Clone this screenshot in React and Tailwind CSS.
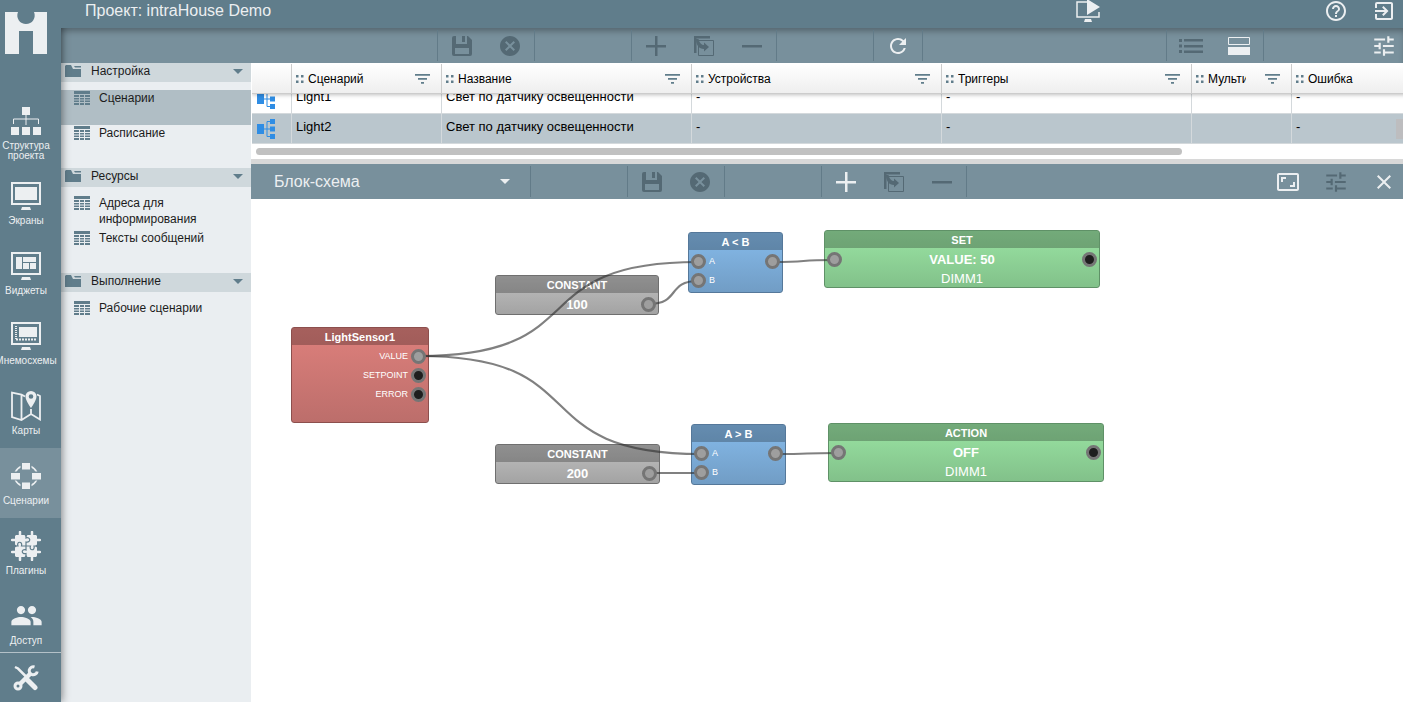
import { useEffect, useRef, useState } from 'react'
import {
  MdAspectRatio,
  MdCancel,
  MdClose,
  MdExitToApp,
  MdHelpOutline,
  MdPeople,
  MdRefresh,
  MdTune
} from 'react-icons/md'

/* ---------- icons ---------- */

const Logo = () => (
  <svg viewBox="0 0 42 42" className="size-[42px] fill-[#eceff1]">
    <path d="M0 0H13A8.700 8.700 0 1 0 29 0H42V42H28V19H14V42H0Z" />
  </svg>
)

const StructureIcon = () => (
  <svg viewBox="0 0 30 30" className="size-[30px] fill-current">
    <path d="M11 1h8v8h-8zM0 21h8v8H0zM11 21h8v8h-8zM22 21h8v8h-8z" />
    <path d="M15 9v10M2.500 18v-5h25v5" fill="none" stroke="currentColor" />
  </svg>
)

const Monitor = ({ children }) => (
  <svg viewBox="0 0 30 30" className="size-[30px] fill-current">
    <rect x="1" y="2" width="28" height="21" fill="none" stroke="currentColor" strokeWidth="2" />
    <path d="M11 26h8l1 3H10z" />
    {children}
  </svg>
)

const ScreensIcon = () => (
  <Monitor>
    <path d="M4 6h22v13H4z" />
  </Monitor>
)

const WidgetsIcon = () => (
  <Monitor>
    <path d="M5 6h6v12H5zM12 6h13v5H12zM12 12h6v6h-6zM19 12h6v6h-6z" />
  </Monitor>
)

const MnemoIcon = () => (
  <Monitor>
    <path d="M8 6h18v10H8z" />
    <path d="M5 5v14" fill="none" stroke="currentColor" strokeWidth="2" strokeDasharray="1 1" />
    <path d="M5 18.500h21" fill="none" stroke="currentColor" strokeWidth="2" strokeDasharray="2 1" />
  </Monitor>
)

const MapIcon = () => (
  <svg viewBox="0 0 30 30" className="size-[30px]">
    <path
      d="M14 5.500 10.500 3.500 1 1.500V26l9.500 3 9.500-6 9 5.500V5l-3-1.500M10.500 3.500V29M20 18v5"
      fill="none"
      stroke="currentColor"
      strokeWidth="1.800"
    />
    <path
      d="M20 0a5.500 5.500 0 0 0-5.500 5.500C14.500 9.500 20 17 20 17s5.500-7.500 5.500-11.500A5.500 5.500 0 0 0 20 0Zm0 3.200a2.300 2.300 0 1 1 0 4.600 2.300 2.300 0 0 1 0-4.600Z"
      className="fill-current"
    />
  </svg>
)

const ScenarioIcon = () => (
  <svg viewBox="0 0 30 30" className="size-[30px] fill-current">
    <ellipse cx="15" cy="15" rx="11.500" ry="10.500" fill="none" stroke="currentColor" strokeWidth="1.500" />
    <path d="M9.500 1h11v8h-11zM-1 10.500h11v9H-1zM20 10.500h11v9H20zM9.500 21h11v8h-11z" className="fill-[#78909c]" />
    <path d="M11 2h8v6.500h-8zM0 12h9v6.500H0zM21 12h9v6.500h-9zM11 21.500h8V28h-8z" />
  </svg>
)

const PuzzleIcon = () => (
  <svg viewBox="0 0 30 30" className="size-[30px] fill-current">
    <path d="M5 4h8.500L15 6l1.500-2H25l1 1v8.500L24 15l2 1.500V25l-1 1h-8.500L15 24l-1.500 2H5l-1-1v-8.500L6 15l-2-1.500V5z" />
    <path
      d="M9 1v4M21 1v4M9 25v4M21 25v4M1 9h4M1 21h4M25 9h4M25 21h4"
      fill="none"
      stroke="currentColor"
      strokeWidth="2.500"
      strokeLinecap="round"
    />
    <path
      d="M15 4v3c4.500-2 5.500 5 0 4v4M15 15v4c-5-2-5 5 0 3.500V26M4 15h3c-2-5 5-5 3.500 0H15M15 15h4.500c-2 5 5 5 3.500 0h3"
      fill="none"
      stroke="#607d8b"
      strokeWidth="1.200"
    />
  </svg>
)

const ToolsIcon = () => (
  <svg viewBox="0 0 26 26" className="size-[26px]" fill="none" stroke="currentColor">
    <path d="M2 2l3 1.500 9 9" strokeWidth="2.500" />
    <path d="M14.500 15l7.500 7.500" strokeWidth="5" strokeLinecap="round" />
    <path d="M7 19l11-11" strokeWidth="4.500" />
    <circle cx="5" cy="21" r="3" strokeWidth="3" />
    <path d="M21.500 2a4 4 0 1 0 2.700 4.400" strokeWidth="3" />
  </svg>
)

const FolderIcon = () => (
  <svg viewBox="0 0 16 12" className="h-3 w-4 shrink-0 fill-[#607d8b]">
    <path d="M0 1l1-1h5l2 4h8v8H0zM9 1h7v1.500H10z" />
  </svg>
)

const GridIcon = () => (
  <svg viewBox="0 0 16 14" className="h-3.5 w-4 shrink-0 fill-[#607d8b]">
    <path d="M0 0h16v3H0z" />
    <path d="M0 4h5v2H0zM6 4h4v2H6zM11 4h5v2h-5zM0 7h5v1.500H0zM6 7h4v1.500H6zM11 7h5v1.500h-5zM0 9.500h5V11H0zM6 9.500h4V11H6zM11 9.500h5V11h-5zM0 12h5v2H0zM6 12h4v2H6zM11 12h5v2h-5z" />
  </svg>
)

const SaveIcon = () => (
  <svg viewBox="0 0 20 20" className="size-5 fill-current">
    <path
      fillRule="evenodd"
      d="M2 0h2v8h11V0h1l4 4v14a2 2 0 0 1-2 2H2a2 2 0 0 1-2-2V2a2 2 0 0 1 2-2ZM3 12v6h14v-6Z"
    />
    <path d="M10 0h3v6h-3z" />
  </svg>
)

const AddIcon = () => (
  <svg viewBox="0 0 20 20" className="size-5 fill-current">
    <path d="M9 0h2.500v9H20v2.500h-8.500V20H9v-8.500H0V9h9z" />
  </svg>
)

const RemoveIcon = () => (
  <svg viewBox="0 0 20 20" className="size-5 fill-current">
    <path d="M0 9h20v2.500H0z" />
  </svg>
)

const CopyIcon = () => (
  <svg viewBox="0 0 20 20" className="size-5 fill-current">
    <path d="M0 0h16v2.500H2.500V17H0z" />
    <path d="M4.500 4.500h15v15h-15z" fill="none" stroke="currentColor" />
    <path d="M2 3h2.500c1 4 3 6 5.500 6V6.500l5 4.500-5 4.500V13C5 13 2 9 2 3z" />
  </svg>
)

const ListIcon = () => (
  <svg viewBox="0 0 24 14" className="h-3.5 w-6 fill-current">
    <path d="M0 0h3v3H0zM5 0h19v2.500H5zM0 5.500h3v3H0zM5 6h19v2.500H5zM0 11h3v3H0zM5 11.500h19V14H5z" />
  </svg>
)

const SplitIcon = () => (
  <svg viewBox="0 0 22 18" className="h-[18px] w-[22px] fill-current">
    <path d="M.5.500h21v7H.5z" fill="none" stroke="currentColor" />
    <path d="M0 10h22v8H0z" />
  </svg>
)

const PresentIcon = () => (
  <svg viewBox="0 0 24 24" className="size-6 fill-current">
    <path d="M11 3H1v15h22v-5" fill="none" stroke="currentColor" strokeWidth="1.500" />
    <path d="M11 0l13 8-13 8zM9 20h6l1 3H8z" />
  </svg>
)

const FilterIcon = () => (
  <svg viewBox="0 0 15 10" className="h-2.5 w-[15px] shrink-0 fill-[#607d8b]">
    <path d="M0 0h15v1.700H0zM3 4h9v1.700H3zM6 8h3v1.700H6z" />
  </svg>
)

const DragDots = () => (
  <svg viewBox="0 0 8 8" className="size-2 shrink-0 fill-[#607d8b]">
    <path d="M0 0h2.500v2.500H0zM5 0h2.500v2.500H5zM0 5.500h2.500V8H0zM5 5.500h2.500V8H5z" />
  </svg>
)

const SchemaIcon = () => (
  <svg viewBox="0 0 18 20" className="block h-5 w-[18px] fill-[#2f8de4]">
    <path d="M0 5h7v10H0zM13 0h5v5h-5zM13 7.500h5v5h-5zM13 15h5v5h-5z" />
    <path d="M7 10h6M13 2.500h-3v15h3" fill="none" stroke="#2f8de4" />
  </svg>
)

const Caret = ({ className }) => (
  <svg viewBox="0 0 10 5" className={className}>
    <path d="M0 0h10L5 5z" />
  </svg>
)

/* ---------- data ---------- */

const railItems = [
  { label: 'Структура проекта', Icon: StructureIcon },
  { label: 'Экраны', Icon: ScreensIcon },
  { label: 'Виджеты', Icon: WidgetsIcon },
  { label: 'Мнемосхемы', Icon: MnemoIcon },
  { label: 'Карты', Icon: MapIcon },
  { label: 'Сценарии', Icon: ScenarioIcon, active: true },
  { label: 'Плагины', Icon: PuzzleIcon },
  { label: 'Доступ', Icon: () => <MdPeople className="size-[33px] shrink-0" /> }
]

const groups = [
  { title: 'Настройка', items: ['Сценарии', 'Расписание'] },
  { title: 'Ресурсы', items: ['Адреса для информирования', 'Тексты сообщений'] },
  { title: 'Выполнение', items: ['Рабочие сценарии'] }
]

const columns = ['Сценарий', 'Название', 'Устройства', 'Триггеры', 'Мульти', 'Ошибка']

const rows = [
  ['Light1', 'Свет по датчику освещенности', '-', '-', '', '-'],
  ['Light2', 'Свет по датчику освещенности', '-', '-', '', '-']
]

const nodes = [
  {
    id: 'sensor',
    title: 'LightSensor1',
    place: 'left-[40px] top-[128px] w-[138px] h-[96px]',
    tone: 'border-[#8c4f4d] from-[#de807c] to-[#bc6e6b]',
    rows: [
      { text: 'VALUE', kind: 'out', output: 'on' },
      { text: 'SETPOINT', kind: 'out', output: 'off' },
      { text: 'ERROR', kind: 'out', output: 'off' }
    ]
  },
  {
    id: 'c100',
    title: 'CONSTANT',
    place: 'left-[244px] top-[76px] w-[164px] h-[40px]',
    tone: 'border-[#6f6f6f] from-[#c0c0c0] to-[#a3a3a3]',
    rows: [{ text: '100', kind: 'value', output: 'on' }]
  },
  {
    id: 'c200',
    title: 'CONSTANT',
    place: 'left-[244px] top-[245px] w-[165px] h-[40px]',
    tone: 'border-[#6f6f6f] from-[#c0c0c0] to-[#a3a3a3]',
    rows: [{ text: '200', kind: 'value', output: 'on' }]
  },
  {
    id: 'less',
    title: 'A < B',
    place: 'left-[437px] top-[33px] w-[95px] h-[61px]',
    tone: 'border-[#55789a] from-[#86bbeb] to-[#719dc5]',
    rows: [
      { text: 'A', kind: 'in', input: 'on', output: 'on' },
      { text: 'B', kind: 'in', input: 'on' }
    ]
  },
  {
    id: 'more',
    title: 'A > B',
    place: 'left-[440px] top-[225px] w-[95px] h-[61px]',
    tone: 'border-[#55789a] from-[#86bbeb] to-[#719dc5]',
    rows: [
      { text: 'A', kind: 'in', input: 'on', output: 'on' },
      { text: 'B', kind: 'in', input: 'on' }
    ]
  },
  {
    id: 'set',
    title: 'SET',
    place: 'left-[573px] top-[31px] w-[276px] h-[58px]',
    tone: 'border-[#5f9167] from-[#9ae4a3] to-[#82c18a]',
    rows: [
      { text: 'VALUE: 50', kind: 'value', input: 'on', output: 'off' },
      { text: 'DIMM1', kind: 'target' }
    ]
  },
  {
    id: 'action',
    title: 'ACTION',
    place: 'left-[577px] top-[224px] w-[276px] h-[59px]',
    tone: 'border-[#5f9167] from-[#9ae4a3] to-[#82c18a]',
    rows: [
      { text: 'OFF', kind: 'value', input: 'on', output: 'off' },
      { text: 'DIMM1', kind: 'target' }
    ]
  }
]

// [x1, y1, x2, y2] between port centres
const wires = [
  [168, 157, 447, 63],
  [168, 157, 450, 255],
  [398, 105, 447, 82],
  [399, 274, 450, 274],
  [522, 63, 583, 61],
  [525, 255, 587, 254]
]

const wirePath = ([x1, y1, x2, y2]) => {
  const bend = (x2 - x1) * 0.64
  return `M${x1} ${y1}C${x1 + bend} ${y1} ${x2 - bend} ${y2} ${x2} ${y2}`
}

/* ---------- toolbar parts ---------- */

const ToolButton = ({ label, dim, children }) => (
  <button
    type="button"
    aria-label={label}
    className={`flex w-12 items-center justify-center ${dim ? 'text-[#546974]' : 'text-[#eceff1]'}`}
  >
    {children}
  </button>
)

const Section = ({ className = '', children }) => (
  <div className={`my-[2px] flex border-l border-[#627b88] ${className}`}>{children}</div>
)

const Spacer = () => <Section className="w-[97px]" />

const EditButtons = ({ canAdd }) => (
  <>
    <Section>
      <ToolButton label="Сохранить" dim><SaveIcon /></ToolButton>
      <ToolButton label="Отменить" dim><MdCancel className="size-6" /></ToolButton>
    </Section>
    <Spacer />
    <Section>
      <ToolButton label="Добавить" dim={!canAdd}><AddIcon /></ToolButton>
      <ToolButton label="Копировать" dim><CopyIcon /></ToolButton>
      <ToolButton label="Удалить" dim><RemoveIcon /></ToolButton>
    </Section>
  </>
)

const IconButton = ({ label, className = 'text-[#eceff1]', children }) => (
  <button type="button" aria-label={label} className={`flex size-6 items-center justify-center ${className}`}>
    {children}
  </button>
)

/* ---------- page parts ---------- */

function Rail() {
  return (
    <aside className="relative z-10 flex w-[61px] shrink-0 flex-col bg-[#607d8b] text-[#eceff1] shadow-[1px_0_8px_rgba(0,0,0,0.45)]">
      <a href="#home" aria-label="intraHouse" className="block h-[98px] shrink-0 pt-3 pl-[5px]">
        <Logo />
      </a>
      <nav className="min-h-0 flex-1 overflow-hidden">
        {railItems.map(({ label, Icon, active }) => (
          <a
            key={label}
            href="#section"
            className={`flex h-[70px] flex-col items-center justify-center gap-[5px] pr-[9px] ${active ? 'bg-[#78909c]' : ''}`}
          >
            <span className="flex size-[30px] items-center justify-center"><Icon /></span>
            <span className="text-center text-[10px] leading-[10px]">{label}</span>
          </a>
        ))}
      </nav>
      <button
        type="button"
        aria-label="Инструменты"
        className="flex h-[50px] shrink-0 items-center justify-center border-t border-[#b4c1c8] pr-[9px]"
      >
        <ToolsIcon />
      </button>
    </aside>
  )
}

function Header() {
  return (
    <header className="relative z-20 flex h-7 shrink-0 items-center bg-[#607d8b] pr-[7px] pb-[6px] pl-6 text-[#eceff1]">
      <h1 className="flex-1 text-base leading-5">Проект: intraHouse Demo</h1>
      <div className="mr-56 flex"><IconButton label="Просмотр"><PresentIcon /></IconButton></div>
      <div className="flex gap-6">
        <IconButton label="Помощь"><MdHelpOutline className="size-6" /></IconButton>
        <IconButton label="Выход"><MdExitToApp className="size-6" /></IconButton>
      </div>
    </header>
  )
}

function Sidebar() {
  const [selected, setSelected] = useState('Сценарии')

  return (
    <div className="w-[190px] shrink-0 bg-[#eaeef1] text-xs leading-4 text-[#1c1c1c]">
      {groups.map((group) => (
        <section key={group.title}>
          <button type="button" className="flex h-[19px] w-full items-center bg-[#cfd8dc] pr-2 pb-[3px] pl-1 text-left">
            <FolderIcon />
            <span className="ml-2.5 flex-1">{group.title}</span>
            <Caret className="h-[5px] w-2.5 fill-[#607d8b]" />
          </button>
          <div className="py-2">
            {group.items.map((item) => (
              <a
                key={item}
                href="#item"
                onClick={() => setSelected(item)}
                className={`flex h-[35px] items-start gap-[9px] pr-8 pl-[13px] ${
                  item === selected ? 'bg-[#b0bec5]' : ''
                }`}
              >
                <span className="pt-px"><GridIcon /></span>
                <span>{item}</span>
              </a>
            ))}
          </div>
        </section>
      ))}
    </div>
  )
}

function ScenarioTable() {
  const ref = useRef(null)

  // keep the selected (last) row in view
  useEffect(() => {
    ref.current.scrollTop = ref.current.scrollHeight
  }, [])

  return (
    <div className="relative shrink-0 bg-white pl-px">
      <div ref={ref} className="mt-px h-20 overflow-auto [scrollbar-width:none]">
        <table className="w-[1290px] table-fixed border-separate border-spacing-0 text-[13px] text-black">
          <colgroup>
            <col className="w-[40px]" />
            <col className="w-[150px]" />
            <col className="w-[250px]" />
            <col className="w-[250px]" />
            <col className="w-[250px]" />
            <col className="w-[100px]" />
            <col className="w-[250px]" />
          </colgroup>
          <thead className="sticky top-0 z-10 shadow-[0_1px_4px_rgba(0,0,0,0.25)]">
            <tr className="h-[30px] bg-linear-to-b from-white to-[#eeeeee]">
              <th className="border-r border-b border-[#cccccc] p-0" aria-label="Тип" />
              {columns.map((column) => (
                <th key={column} className="border-r border-b border-[#cccccc] p-0 text-xs font-normal">
                  <div className="flex items-center pr-[11px] pl-1">
                    <DragDots />
                    <span className="mr-[19px] ml-1 flex-1 overflow-hidden text-left whitespace-nowrap">{column}</span>
                    <FilterIcon />
                  </div>
                </th>
              ))}
            </tr>
          </thead>
          <tbody>
            {rows.map((row, i) => (
              <tr key={row[0]} className={i === 1 ? 'h-[30px] bg-[#bac6cd]' : 'h-[30px]'}>
                <td className="border-r border-b border-[#d4d9dc] p-0 pl-[5px]"><SchemaIcon /></td>
                {row.map((cell, j) => (
                  <td key={j} className="border-r border-b border-[#d4d9dc] p-0 pl-1 align-top leading-[26px] whitespace-nowrap">
                    {cell}
                  </td>
                ))}
              </tr>
            ))}
          </tbody>
        </table>
      </div>
      <div className="absolute top-14 right-0 h-5 w-[7px] bg-[#bdbdbf]" />
      <div className="h-[15px] px-1 py-1">
        <div className="h-[7px] w-[81%] rounded-full bg-[#c1c1c1]" />
      </div>
    </div>
  )
}

const portTone = {
  on: 'border-[#757575] bg-[#9e9e9e]',
  off: 'border-[#757575] bg-[#1e1e1e]'
}

const Port = ({ state }) =>
  state ? <span className={`relative z-20 size-[15px] rounded-full border-[3px] ${portTone[state]}`} /> : <span />

const rowText = {
  in: 'pl-[3px] text-left text-[9px]',
  out: 'pr-[3px] text-right text-[9px]',
  value: 'text-center text-[13px] font-bold',
  target: 'text-center text-[13px]'
}

const Node = ({ node }) => (
  <div className={`absolute overflow-hidden rounded-[3px] border bg-linear-to-b text-white ${node.place} ${node.tone}`}>
    <div className="mb-[2px] h-[17px] bg-black/25 text-center text-[11px] leading-[18px] font-bold">{node.title}</div>
    {node.rows.map((row) => (
      <div key={row.text} className="grid h-[19px] grid-cols-[15px_1fr_15px] items-center px-[2px]">
        <Port state={row.input} />
        <span className={`leading-[19px] ${rowText[row.kind]}`}>{row.text}</span>
        <Port state={row.output} />
      </div>
    ))}
  </div>
)

function Canvas() {
  return (
    <div className="relative min-h-0 flex-1 overflow-hidden bg-white">
      {nodes.map((node) => (
        <Node key={node.id} node={node} />
      ))}
      <svg className="pointer-events-none absolute inset-0 z-10 size-full">
        {wires.map((wire) => (
          <path key={wire.join()} d={wirePath(wire)} fill="none" stroke="#2b2b2b" strokeOpacity="0.6" strokeWidth="2.200" />
        ))}
      </svg>
    </div>
  )
}

export default function App() {
  return (
    <div className="flex h-screen overflow-hidden bg-white font-['Liberation_Sans',Arial,sans-serif]">
      <Rail />
      <div className="flex min-w-0 flex-1 flex-col">
        <Header />
        <div className="flex h-[35px] shrink-0 bg-[#78909c] shadow-[inset_0_5px_6px_-2px_rgba(0,0,0,0.3)]">
          <div className="w-[376px] shrink-0" />
          <EditButtons />
          <Spacer />
          <Section>
            <ToolButton label="Обновить"><MdRefresh className="size-6" /></ToolButton>
          </Section>
          <Section className="flex-1" />
          <Section>
            <ToolButton label="Список" dim><ListIcon /></ToolButton>
            <ToolButton label="Разделить"><SplitIcon /></ToolButton>
          </Section>
          <Section className="w-[140px] items-center justify-end pr-[7px]">
            <IconButton label="Настройки"><MdTune className="size-[26px] shrink-0" /></IconButton>
          </Section>
        </div>

        <div className="flex min-h-0 flex-1">
          <Sidebar />
          <main className="flex min-w-0 flex-1 flex-col">
            <ScenarioTable />
            <div className="h-[5px] shrink-0 bg-[#d8d8d8]" />
            <div className="flex h-[35px] shrink-0 bg-[#78909c]">
              <div className="relative w-[279px] shrink-0">
                <select
                  aria-label="Вид"
                  className="size-full appearance-none bg-transparent pl-[23px] text-base text-[#eceff1] outline-none"
                >
                  <option>Блок-схема</option>
                </select>
                <Caret className="pointer-events-none absolute top-[15px] right-5 h-[5px] w-2.5 fill-[#eceff1]" />
              </div>
              <Spacer />
              <EditButtons canAdd />
              <Section className="flex-1 items-center justify-end gap-6 pr-[7px]">
                <IconButton label="По размеру"><MdAspectRatio className="size-6" /></IconButton>
                <IconButton label="Параметры" className="text-[#546974]"><MdTune className="size-[26px] shrink-0" /></IconButton>
                <IconButton label="Закрыть"><MdClose className="size-6" /></IconButton>
              </Section>
            </div>
            <Canvas />
          </main>
        </div>
      </div>
    </div>
  )
}
